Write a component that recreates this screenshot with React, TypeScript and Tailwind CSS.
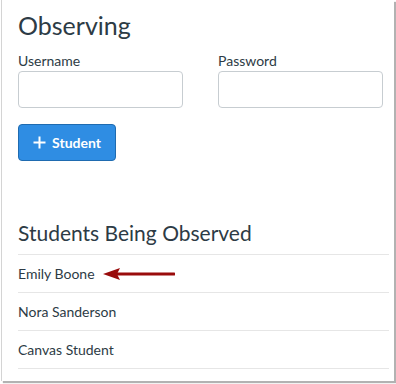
import React from "react";

export default function App() {
  const students = ["Emily Boone", "Nora Sanderson", "Canvas Student"];
  return (
    <div className="w-[396px] h-[384px] bg-white" style={{ fontFamily: "Lato, 'Open Sans', sans-serif" }}>
      <div className="ml-[1px] w-[393px] h-[381px] bg-white border-l border-[#d4d4d4] shadow-[2px_2px_1px_rgba(0,0,0,0.3)] pl-4 pr-[5px] pt-[10px] text-[#2d3b45]">
        <h1 className="text-[25px] leading-[30px] font-normal">Observing</h1>
        <div className="mt-[12px] flex gap-[35px]">
          <div className="w-[165px]">
            <div className="text-[14px] leading-[17px]">Username</div>
            <div className="mt-[2px] h-[37px] rounded-[4px] border border-[#c7cdd1] bg-white" />
          </div>
          <div className="w-[165px]">
            <div className="text-[14px] leading-[17px]">Password</div>
            <div className="mt-[2px] h-[37px] rounded-[4px] border border-[#c7cdd1] bg-white" />
          </div>
        </div>
        <button className="mt-[16px] flex h-[37px] w-[98px] items-center justify-center gap-[6px] rounded-[4px] border border-[#1f6bb0] bg-[#2f8de3] text-white text-[14px] font-bold">
          <svg width="13" height="13" viewBox="0 0 13 13">
            <path d="M6.5 0.5V12.5M0.5 6.5H12.5" stroke="white" strokeWidth="2" />
          </svg>
          <span className="leading-[17px]">Student</span>
        </button>
        <h2 className="mt-[59px] text-[21px] leading-[25px] font-normal">Students Being Observed</h2>
        <div className="mt-[9px] border-t border-[#e6e6e6]">
          {students.map((s, i) => (
            <div key={s} className="flex items-center h-[38px] border-b border-[#e6e6e6] text-[14px] leading-[17px]">
              <span>{s}</span>
              {i === 0 && (
                <svg className="ml-[8px]" width="72" height="14" viewBox="0 0 72 14">
                  <path d="M14 7H71" stroke="#990b0b" strokeWidth="3" strokeLinecap="round" />
                  <path d="M0 7L17 1L14 7L17 13Z" fill="#990b0b" />
                </svg>
              )}
            </div>
          ))}
        </div>
      </div>
    </div>
  );
}
